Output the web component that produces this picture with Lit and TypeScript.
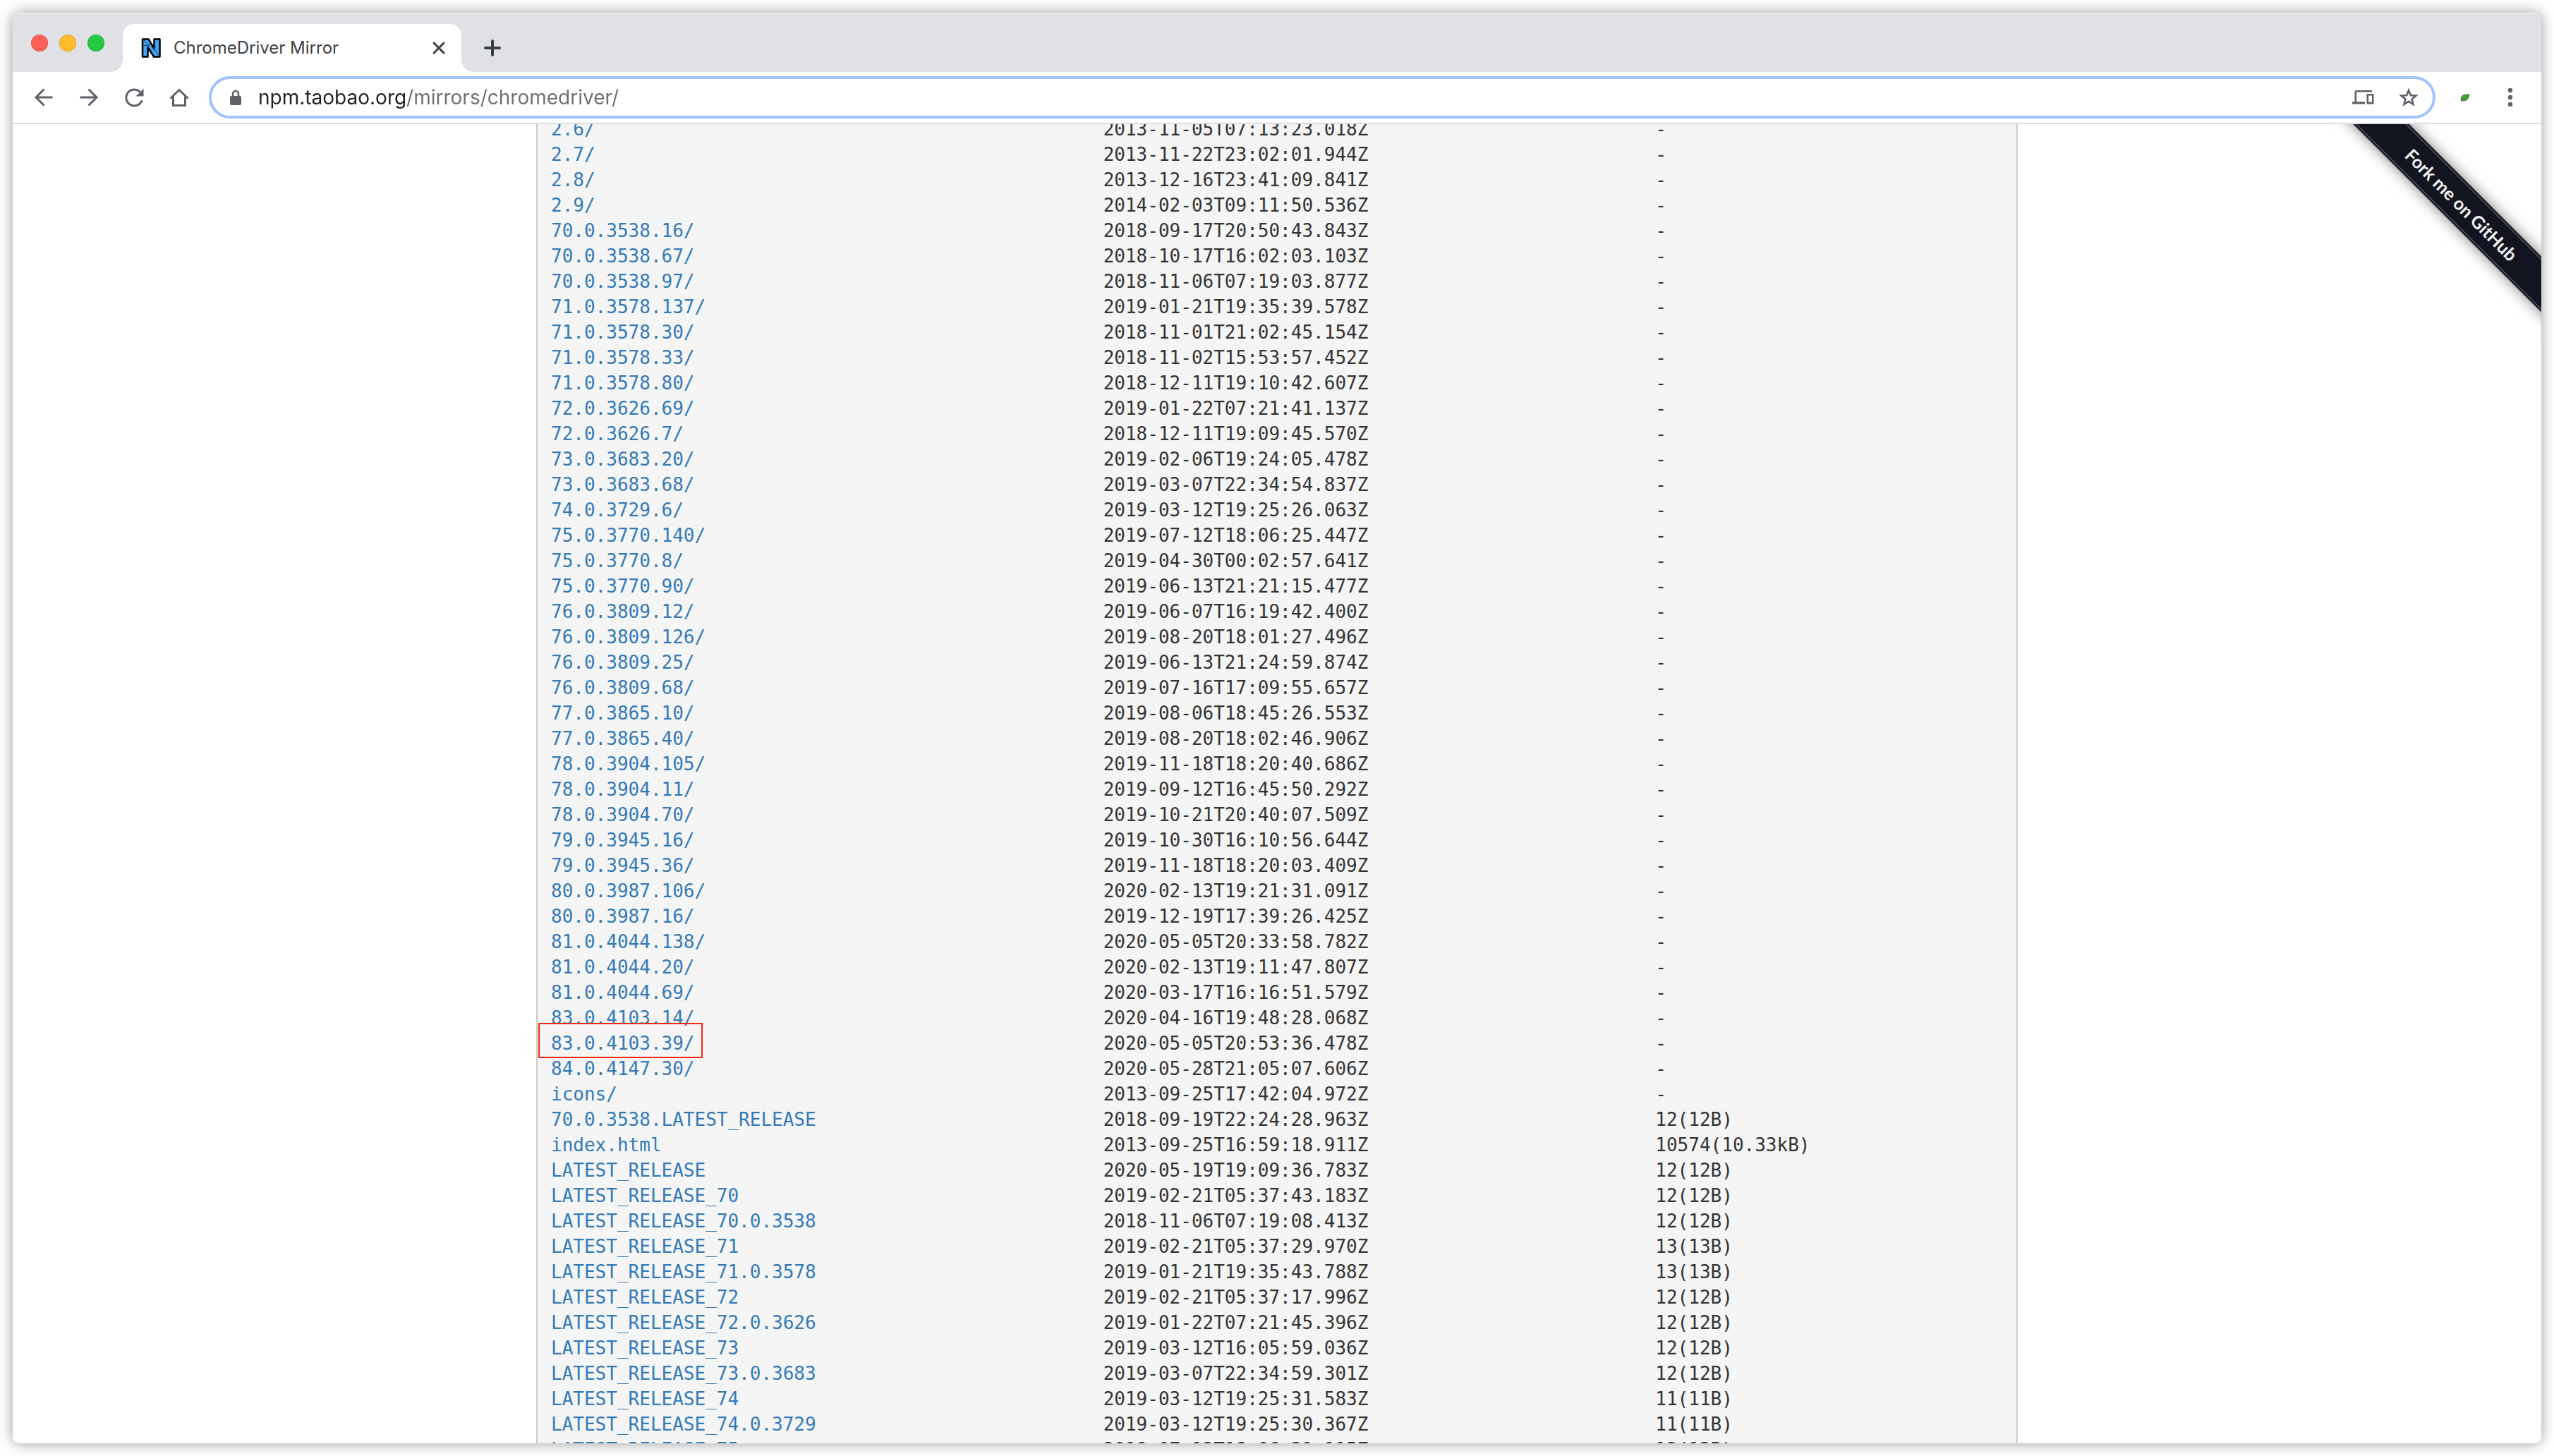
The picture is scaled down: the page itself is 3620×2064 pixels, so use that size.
import { LitElement, html, css, svg } from "lit";
import { customElement } from "lit/decorators.js";
import { classMap } from "lit/directives/class-map.js";

interface Entry {
  name: string;
  date: string;
  size: string;
}

const LISTING = `
2.6/ 2013-11-05T07:13:23.018Z -
2.7/ 2013-11-22T23:02:01.944Z -
2.8/ 2013-12-16T23:41:09.841Z -
2.9/ 2014-02-03T09:11:50.536Z -
70.0.3538.16/ 2018-09-17T20:50:43.843Z -
70.0.3538.67/ 2018-10-17T16:02:03.103Z -
70.0.3538.97/ 2018-11-06T07:19:03.877Z -
71.0.3578.137/ 2019-01-21T19:35:39.578Z -
71.0.3578.30/ 2018-11-01T21:02:45.154Z -
71.0.3578.33/ 2018-11-02T15:53:57.452Z -
71.0.3578.80/ 2018-12-11T19:10:42.607Z -
72.0.3626.69/ 2019-01-22T07:21:41.137Z -
72.0.3626.7/ 2018-12-11T19:09:45.570Z -
73.0.3683.20/ 2019-02-06T19:24:05.478Z -
73.0.3683.68/ 2019-03-07T22:34:54.837Z -
74.0.3729.6/ 2019-03-12T19:25:26.063Z -
75.0.3770.140/ 2019-07-12T18:06:25.447Z -
75.0.3770.8/ 2019-04-30T00:02:57.641Z -
75.0.3770.90/ 2019-06-13T21:21:15.477Z -
76.0.3809.12/ 2019-06-07T16:19:42.400Z -
76.0.3809.126/ 2019-08-20T18:01:27.496Z -
76.0.3809.25/ 2019-06-13T21:24:59.874Z -
76.0.3809.68/ 2019-07-16T17:09:55.657Z -
77.0.3865.10/ 2019-08-06T18:45:26.553Z -
77.0.3865.40/ 2019-08-20T18:02:46.906Z -
78.0.3904.105/ 2019-11-18T18:20:40.686Z -
78.0.3904.11/ 2019-09-12T16:45:50.292Z -
78.0.3904.70/ 2019-10-21T20:40:07.509Z -
79.0.3945.16/ 2019-10-30T16:10:56.644Z -
79.0.3945.36/ 2019-11-18T18:20:03.409Z -
80.0.3987.106/ 2020-02-13T19:21:31.091Z -
80.0.3987.16/ 2019-12-19T17:39:26.425Z -
81.0.4044.138/ 2020-05-05T20:33:58.782Z -
81.0.4044.20/ 2020-02-13T19:11:47.807Z -
81.0.4044.69/ 2020-03-17T16:16:51.579Z -
83.0.4103.14/ 2020-04-16T19:48:28.068Z -
83.0.4103.39/ 2020-05-05T20:53:36.478Z -
84.0.4147.30/ 2020-05-28T21:05:07.606Z -
icons/ 2013-09-25T17:42:04.972Z -
70.0.3538.LATEST_RELEASE 2018-09-19T22:24:28.963Z 12(12B)
index.html 2013-09-25T16:59:18.911Z 10574(10.33kB)
LATEST_RELEASE 2020-05-19T19:09:36.783Z 12(12B)
LATEST_RELEASE_70 2019-02-21T05:37:43.183Z 12(12B)
LATEST_RELEASE_70.0.3538 2018-11-06T07:19:08.413Z 12(12B)
LATEST_RELEASE_71 2019-02-21T05:37:29.970Z 13(13B)
LATEST_RELEASE_71.0.3578 2019-01-21T19:35:43.788Z 13(13B)
LATEST_RELEASE_72 2019-02-21T05:37:17.996Z 12(12B)
LATEST_RELEASE_72.0.3626 2019-01-22T07:21:45.396Z 12(12B)
LATEST_RELEASE_73 2019-03-12T16:05:59.036Z 12(12B)
LATEST_RELEASE_73.0.3683 2019-03-07T22:34:59.301Z 12(12B)
LATEST_RELEASE_74 2019-03-12T19:25:31.583Z 11(11B)
LATEST_RELEASE_74.0.3729 2019-03-12T19:25:30.367Z 11(11B)
LATEST_RELEASE_75 2019-07-12T18:06:31.115Z 12(12B)
`;

const ENTRIES: Entry[] = LISTING.trim()
  .split("\n")
  .map((line) => {
    const [name, date, size] = line.split(" ");
    return { name, date, size };
  });

const MARKED = "83.0.4103.39/";

const icon = (size: number, body: unknown) => html`
  <svg class="icon" width=${size} height=${size} viewBox="0 0 ${size} ${size}" aria-hidden="true">${body}</svg>
`;

const back = icon(32, svg`<path d="M28.500 16H5M16.500 4.500L5 16l11.500 11.500" />`);
const forward = icon(32, svg`<path d="M3.500 16H27M15.500 4.500L27 16 15.500 27.500" />`);
const reload = icon(
  32,
  svg`<path d="M27.200 20.200A11.500 11.500 0 1 1 24.300 8.200" /><path class="solid" d="M29.500 3.500v11h-11z" />`
);
const home = icon(
  32,
  svg`<path d="M3.500 17.500L16 5.500l12.500 12M7.500 15v12.500h17V15" />`
);
const lock = icon(
  24,
  svg`<path class="solid" d="M6 10h12a2 2 0 0 1 2 2v9a2 2 0 0 1-2 2H6a2 2 0 0 1-2-2v-9a2 2 0 0 1 2-2z" /><path class="thin" d="M8 11V7a4 4 0 0 1 8 0v4" />`
);
const devices = icon(
  32,
  svg`<path class="solid" d="M6 6h22v2.600H6zM3.500 8.600A2.600 2.600 0 0 1 6.100 6v16.500H3.500zM0 22.300h18v3.300H0z" /><path d="M21.800 12.300h7.400v11.800h-7.400z" class="thin" />`
);
const star = icon(
  32,
  svg`<path class="thin" d="M16 6l2.800 7.100 7.700.5-5.900 4.900 1.900 7.400-6.500-4.100-6.500 4.100 1.900-7.400-5.900-4.900 7.700-.5z" />`
);
const leaf = icon(
  16,
  svg`<path class="leaf" d="M2.500 12.500C1.500 7.500 4.500 4 9 4.200c2 .1 3.500.2 5-.9-.9 1.300-.6 2.700-1.200 4.700-1.200 4-5.600 5.600-10.300 4.500z" /><path class="vein" d="M4 11c2.500-3 5-4.500 8-5.500" />`
);
const dots = icon(
  32,
  svg`<circle class="solid" cx="16" cy="6" r="3.200" /><circle class="solid" cx="16" cy="16" r="3.200" /><circle class="solid" cx="16" cy="26" r="3.200" />`
);
const cross = icon(20, svg`<path class="dark" d="M3 3l14 14M17 3L3 17" />`);
const plus = icon(28, svg`<path class="dark wide" d="M14 4v20M4 14h20" />`);
const favicon = html`
  <svg width="28" height="28" viewBox="0 0 28 28" aria-hidden="true">
    <path class="fav" d="M2 1.500h8.500L18.500 15V1.500H26.500v25h-8.500L9.500 13v13.500H2z" />
    <path class="scratch" d="M3 11l12-2M4 3l7 9M17 13l8 11" />
  </svg>
`;

@customElement("app-root")
export class AppRoot extends LitElement {
  static styles = css`
    :host {
      display: block;
      box-sizing: border-box;
      height: 100vh;
      padding: 18px;
      background: #fff;
      overflow: hidden;
      font-family: Inter, "Liberation Sans", sans-serif;
    }
    .window {
      display: flex;
      flex-direction: column;
      height: 100%;
      border-radius: 10px;
      background: #fff;
      box-shadow: 0 0 20px rgba(0, 0, 0, 0.4);
      overflow: hidden;
    }
    button {
      display: flex;
      align-items: center;
      justify-content: center;
      margin: 0;
      padding: 0;
      border: 0;
      background: none;
      font: inherit;
      color: inherit;
    }
    .strip {
      display: flex;
      flex: none;
      align-items: stretch;
      height: 84px;
      background: #dfe1e5;
      box-shadow: inset 0 2px #ebecef;
    }
    .lights {
      display: flex;
      gap: 16px;
      padding: 31px 26px 0;
    }
    .light {
      width: 24px;
      height: 24px;
      border-radius: 50%;
      box-shadow: inset 0 0 0 1px rgba(0, 0, 0, 0.12);
    }
    .close { background: #ff5f57; }
    .min { background: #febc2e; }
    .max { background: #28c840; }
    .tab {
      position: relative;
      display: flex;
      align-items: center;
      box-sizing: border-box;
      width: 480px;
      margin-top: 16px;
      padding: 0 22px 0 26px;
      border-radius: 16px 16px 0 0;
      background: #fff;
    }
    .tab::before,
    .tab::after {
      content: "";
      position: absolute;
      bottom: 0;
      width: 16px;
      height: 16px;
    }
    .tab::before {
      right: 100%;
      background: radial-gradient(circle at 0 0, transparent 15px, #fff 16px);
    }
    .tab::after {
      left: 100%;
      background: radial-gradient(circle at 100% 0, transparent 15px, #fff 16px);
    }
    .title {
      flex: 1;
      padding-left: 18px;
      font-size: 24px;
      line-height: 32px;
      color: #3c4043;
      white-space: nowrap;
    }
    .add {
      width: 56px;
      margin: 16px 0 0 16px;
    }
    .toolbar {
      display: flex;
      flex: none;
      align-items: center;
      height: 72px;
      padding: 0 12px;
      border-bottom: 2px solid #dadce0;
    }
    .tool {
      width: 64px;
      height: 60px;
    }
    .address {
      display: flex;
      flex: 1;
      align-items: center;
      box-sizing: border-box;
      height: 60px;
      margin: 0 10px;
      padding: 0 2px 0 22px;
      border: 4px solid #a1c2fd;
      border-radius: 30px;
    }
    .url {
      flex: 1;
      min-width: 0;
      margin: 0 0 0 20px;
      padding: 0;
      border: 0;
      outline: 0;
      font-family: inherit;
      font-size: 28px;
      line-height: 36px;
      color: transparent;
      background: linear-gradient(90deg, #202124 210px, #6b6f73 210px);
      -webkit-background-clip: text;
      background-clip: text;
    }
    .icon {
      display: block;
      flex: none;
      fill: none;
      stroke: #5f6368;
      stroke-width: 3;
    }
    .icon .solid {
      fill: #5f6368;
      stroke: none;
    }
    .icon .thin { stroke-width: 2.6; }
    .icon .dark {
      stroke: #3c4043;
      stroke-linecap: round;
    }
    .icon .wide { stroke-width: 4; }
    .icon .leaf {
      fill: #4aa63a;
      stroke: #3c5a36;
      stroke-width: 1;
    }
    .icon .vein {
      stroke: #2f8f27;
      stroke-width: 1;
    }
    .fav {
      fill: #3fa4f5;
      stroke: #000;
      stroke-width: 2.5;
      stroke-linejoin: round;
    }
    .scratch {
      fill: none;
      stroke: #12395c;
      stroke-width: 1;
    }
    .page {
      position: relative;
      flex: 1;
      min-height: 0;
      overflow: hidden;
    }
    .listing {
      box-sizing: border-box;
      max-width: 2100px;
      margin: -11px auto 0;
      padding: 0 19px;
      border: 2px solid #ccc;
      border-width: 0 2px;
      background: #f5f5f5;
      font-family: "DejaVu Sans Mono", monospace;
      font-size: 26px;
      line-height: 36px;
      color: #333;
    }
    table {
      border-collapse: collapse;
      table-layout: fixed;
      width: 100%;
    }
    td {
      height: 36px;
      padding: 0;
      white-space: nowrap;
    }
    .col { width: 50ch; }
    .link {
      position: relative;
      color: #337ab7;
      text-decoration: none;
    }
    .marked::after {
      content: "";
      position: absolute;
      inset: -14px -11px -6px -18px;
      border: 2px solid #f5290e;
    }
    .ribbon {
      position: absolute;
      top: 86px;
      right: -107px;
      display: flex;
      align-items: center;
      justify-content: center;
      box-sizing: border-box;
      width: 440px;
      height: 56px;
      background: #12141f;
      box-shadow: 0 0 20px rgba(0, 0, 0, 0.5);
      transform: rotate(45deg);
      font-family: Lato, sans-serif;
      font-size: 25px;
      font-weight: 700;
      line-height: 32px;
      color: #f2f2f2;
      text-decoration: none;
      white-space: nowrap;
    }
    .ribbon::before {
      content: "";
      position: absolute;
      inset: 2px 0;
      border: 2px solid #454852;
      border-width: 2px 0;
    }
  `;

  private row(entry: Entry) {
    const linkClass = classMap({ link: true, marked: entry.name === MARKED });
    return html`
      <tr>
        <td><a class=${linkClass} href="#${entry.name}">${entry.name}</a></td>
        <td>${entry.date}</td>
        <td>${entry.size}</td>
      </tr>
    `;
  }

  render() {
    return html`
      <div class="window">
        <header class="strip">
          <div class="lights">
            <button class="light close" aria-label="Close window"></button>
            <button class="light min" aria-label="Minimise window"></button>
            <button class="light max" aria-label="Zoom window"></button>
          </div>
          <div class="tab">
            ${favicon}
            <span class="title">ChromeDriver Mirror</span>
            <button aria-label="Close tab">${cross}</button>
          </div>
          <button class="add" aria-label="New tab">${plus}</button>
        </header>
        <nav class="toolbar">
          <button class="tool" aria-label="Back">${back}</button>
          <button class="tool" aria-label="Forward">${forward}</button>
          <button class="tool" aria-label="Reload">${reload}</button>
          <button class="tool" aria-label="Home">${home}</button>
          <div class="address">
            ${lock}
            <input class="url" type="text" aria-label="Address" value="npm.taobao.org/mirrors/chromedriver/" />
            <button class="tool" aria-label="Send to your devices">${devices}</button>
            <button class="tool" aria-label="Bookmark this page">${star}</button>
          </div>
          <button class="tool" aria-label="Extension">${leaf}</button>
          <button class="tool" aria-label="Menu">${dots}</button>
        </nav>
        <main class="page">
          <div class="listing">
            <table>
              <colgroup>
                <col class="col" />
                <col class="col" />
                <col />
              </colgroup>
              <tbody>
                ${ENTRIES.map((entry) => this.row(entry))}
              </tbody>
            </table>
          </div>
          <a class="ribbon" href="#github">Fork me on GitHub</a>
        </main>
      </div>
    `;
  }
}
